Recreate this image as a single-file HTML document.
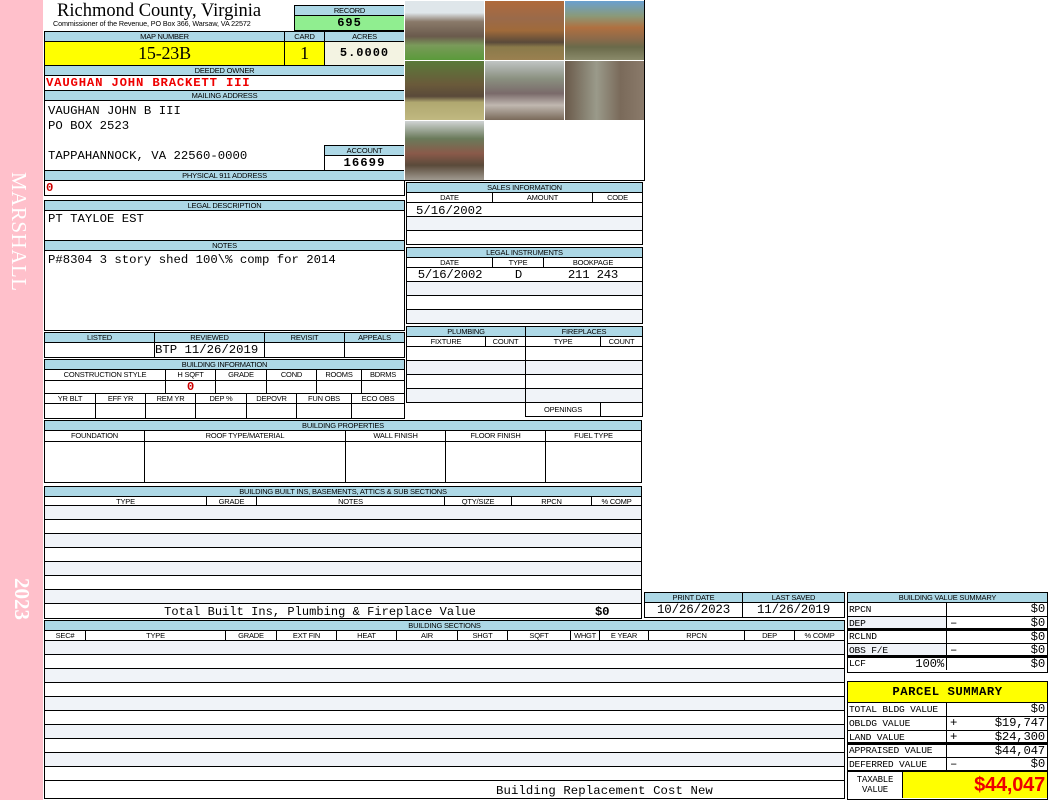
<!DOCTYPE html>
<html><head><meta charset="utf-8">
<style>
*{margin:0;padding:0;box-sizing:border-box}
body{width:1050px;height:800px;background:#fff;position:relative;overflow:hidden;font-family:"Liberation Sans",sans-serif}
.a{position:absolute}
.bx{position:absolute;border:1px solid #000;background:#fff}
.hd{background:#add8e6;border-bottom:1px solid #000;font-size:7.5px;text-align:center;overflow:hidden;white-space:nowrap;letter-spacing:-0.2px}
.r{display:flex;border-bottom:1px solid #000;overflow:hidden}
.r:last-child{border-bottom:none}
.r>div{border-right:1px solid #000;font-size:7.5px;text-align:center;white-space:nowrap;overflow:hidden;letter-spacing:-0.2px}
.r>div:last-child{border-right:none;flex:1}
.alt{background:#f0f3f8}
.m{font-family:"Liberation Mono",monospace}
.ph{position:absolute;width:79px;height:59px}
</style></head><body>
<div class="a" style="left:0;top:0;width:43px;height:800px;background:#ffc0cb"></div>
<div class="a" style="left:31px;top:172px;transform-origin:0 0;transform:rotate(90deg);font-family:'Liberation Serif',serif;font-size:21px;color:#fff;white-space:nowrap;letter-spacing:0.5px">MARSHALL</div>
<div class="a" style="left:34px;top:578px;transform-origin:0 0;transform:rotate(90deg);font-family:'Liberation Serif',serif;font-size:21px;font-weight:bold;color:#fff">2023</div>

<div class="a" style="left:57px;top:1px;font-family:'Liberation Serif',serif;font-size:18.5px">Richmond County, Virginia</div>
<div class="a" style="left:53px;top:19px;font-size:7.2px;letter-spacing:-0.1px">Commissioner of the Revenue, PO Box 366, Warsaw, VA 22572</div>

<div class="bx" style="left:294px;top:5px;width:111px;height:26px">
<div class="hd" style="height:10px;line-height:10px">RECORD</div>
<div class="m" style="background:#90ee90;height:14px;line-height:14px;text-align:center;font-weight:bold;font-size:12px;letter-spacing:1px">695</div></div>

<div class="bx" style="left:44px;top:31px;width:361px;height:35px">
<div class="r" style="height:10px;background:#add8e6;line-height:9px"><div style="width:240px">MAP NUMBER</div><div style="width:40px">CARD</div><div>ACRES</div></div>
<div class="r" style="height:23px"><div style="width:240px;background:#ffff00;font-family:'Liberation Serif',serif;font-size:18px;line-height:23px">15-23B</div><div style="width:40px;background:#ffff00;font-family:'Liberation Serif',serif;font-size:18px;line-height:23px">1</div><div class="m" style="background:#f3f3e2;font-size:12px;font-weight:bold;line-height:23px;letter-spacing:1px">5.0000</div></div></div>

<div class="bx" style="left:44px;top:65px;width:361px;height:26px">
<div class="hd" style="height:10px;line-height:10px">DEEDED OWNER</div>
<div class="m" style="color:#e00;font-weight:bold;font-size:12.3px;line-height:15px;padding-left:1px;letter-spacing:0.8px">VAUGHAN JOHN BRACKETT III</div></div>

<div class="bx" style="left:44px;top:90px;width:361px;height:81px">
<div class="hd" style="height:10px;line-height:10px">MAILING ADDRESS</div>
<div class="m" style="font-size:12.3px;line-height:15px;padding:3px 0 0 3px">VAUGHAN JOHN B III<br>PO BOX 2523<br><br>TAPPAHANNOCK, VA 22560-0000</div></div>
<div class="bx" style="left:324px;top:145px;width:81px;height:26px">
<div class="hd" style="height:10px;line-height:10px">ACCOUNT</div>
<div class="m" style="font-size:12.3px;font-weight:bold;line-height:15px;text-align:center;letter-spacing:1px">16699</div></div>

<div class="bx" style="left:44px;top:170px;width:361px;height:26px">
<div class="hd" style="height:10px;line-height:10px">PHYSICAL 911 ADDRESS</div>
<div class="m" style="color:#c00;font-weight:bold;font-size:12.3px;line-height:15px;padding-left:1px">0</div></div>

<div class="bx" style="left:44px;top:200px;width:361px;height:41px">
<div class="hd" style="height:10px;line-height:10px">LEGAL DESCRIPTION</div>
<div class="m" style="font-size:12.3px;line-height:17px;padding-left:3px">PT TAYLOE EST</div></div>

<div class="bx" style="left:44px;top:240px;width:361px;height:91px">
<div class="hd" style="height:10px;line-height:10px">NOTES</div>
<div class="m" style="font-size:12.3px;line-height:18px;padding-left:3px">P#8304 3 story shed 100\% comp for 2014</div></div>

<div class="bx" style="left:44px;top:332px;width:361px;height:26px">
<div class="r" style="height:10px;background:#add8e6;line-height:9px"><div style="width:110px">LISTED</div><div style="width:110px">REVIEWED</div><div style="width:80px">REVISIT</div><div>APPEALS</div></div>
<div class="r" style="height:14px"><div style="width:110px"></div><div class="m" style="width:110px;font-size:12.3px;text-align:left;line-height:14px;letter-spacing:0">BTP 11/26/2019</div><div style="width:80px"></div><div></div></div></div>

<div class="bx" style="left:44px;top:359px;width:361px;height:60px">
<div class="hd" style="height:10px;line-height:10px">BUILDING INFORMATION</div>
<div class="r" style="height:11px;line-height:10px"><div style="width:121px">CONSTRUCTION STYLE</div><div style="width:50px">H SQFT</div><div style="width:51px">GRADE</div><div style="width:50px">COND</div><div style="width:45px">ROOMS</div><div>BDRMS</div></div>
<div class="r" style="height:13px"><div style="width:121px"></div><div class="m" style="width:50px;color:#c00;font-weight:bold;font-size:12.3px;line-height:13px">0</div><div style="width:51px"></div><div style="width:50px"></div><div style="width:45px"></div><div></div></div>
<div class="r" style="height:10px;line-height:9px"><div style="width:51px">YR BLT</div><div style="width:50px">EFF YR</div><div style="width:50px">REM YR</div><div style="width:51px">DEP %</div><div style="width:50px">DEPOVR</div><div style="width:55px">FUN OBS</div><div>ECO OBS</div></div>
<div class="r" style="height:14px"><div style="width:51px"></div><div style="width:50px"></div><div style="width:50px"></div><div style="width:51px"></div><div style="width:50px"></div><div style="width:55px"></div><div></div></div></div>

<!-- photos -->
<div class="bx" style="left:404px;top:0;width:241px;height:181px;border-left:none;border-top:none"></div>
<div class="ph" style="left:405px;top:1px;background:linear-gradient(#dfe6ea 0,#dfe6ea 20%,#8a7a6a 35%,#6a5a4c 60%,#7a9a5a 75%,#5a9a3a 100%)"></div>
<div class="ph" style="left:485px;top:1px;background:linear-gradient(#b06a3a 0,#9a6a4a 30%,#a06a3a 50%,#5a4a3a 70%,#8a7a4a 78%,#9a8050 100%)"></div>
<div class="ph" style="left:565px;top:1px;background:linear-gradient(#6aa0d0 0,#8a9a7a 25%,#b07040 45%,#8a6a4a 65%,#6a6a4a 78%,#8a8a6a 100%)"></div>
<div class="ph" style="left:405px;top:61px;background:linear-gradient(#5a7a3a 0,#6a5a3a 40%,#5a4a3a 60%,#b0a870 70%,#c0b880 100%)"></div>
<div class="ph" style="left:485px;top:61px;background:linear-gradient(#c0c4c4 0,#8a9080 30%,#7a6a6a 55%,#c0b8b0 75%,#7a6a5a 100%)"></div>
<div class="ph" style="left:565px;top:61px;background:linear-gradient(90deg,#6a5a4a,#9a9a8a 40%,#7a6a5a 70%,#8a7a6a);"></div>
<div class="ph" style="left:405px;top:121px;background:linear-gradient(#d0d4d4 0,#6a7a5a 30%,#8a5a4a 55%,#5a4a3a 75%,#a09a90 100%)"></div>

<div class="bx" style="left:406px;top:182px;width:237px;height:63px">
<div class="hd" style="height:10px;line-height:10px">SALES INFORMATION</div>
<div class="r" style="height:10px;line-height:9px"><div style="width:86px">DATE</div><div style="width:100px">AMOUNT</div><div>CODE</div></div>
<div class="r m" style="height:14px;font-size:12.3px;line-height:16px;padding-left:9px">5/16/2002</div>
<div class="r alt" style="height:14px"></div>
<div class="r" style="height:13px"></div></div>

<div class="bx" style="left:406px;top:247px;width:237px;height:77px">
<div class="hd" style="height:10px;line-height:10px">LEGAL INSTRUMENTS</div>
<div class="r" style="height:10px;line-height:9px"><div style="width:86px">DATE</div><div style="width:51px">TYPE</div><div>BOOKPAGE</div></div>
<div class="r m" style="height:14px;line-height:15px"><div style="width:86px;border:none;font-size:12.3px">5/16/2002</div><div style="width:51px;border:none;font-size:12.3px">D</div><div style="font-size:12.3px">211 243</div></div>
<div class="r alt" style="height:14px"></div>
<div class="r" style="height:14px"></div>
<div class="r alt" style="height:13px"></div></div>

<div class="bx" style="left:406px;top:326px;width:120px;height:77px">
<div class="hd" style="height:10px;line-height:10px">PLUMBING</div>
<div class="r" style="height:10px;line-height:9px"><div style="width:79px">FIXTURE</div><div>COUNT</div></div>
<div class="r" style="height:14px"></div><div class="r alt" style="height:14px"></div><div class="r" style="height:14px"></div><div class="r alt" style="height:13px"></div></div>
<div class="bx" style="left:525px;top:326px;width:118px;height:91px">
<div class="hd" style="height:10px;line-height:10px">FIREPLACES</div>
<div class="r" style="height:10px;line-height:9px"><div style="width:75px">TYPE</div><div>COUNT</div></div>
<div class="r" style="height:14px"></div><div class="r alt" style="height:14px"></div><div class="r" style="height:14px"></div><div class="r alt" style="height:14px"></div>
<div class="r" style="height:13px;line-height:13px"><div style="width:75px">OPENINGS</div><div></div></div></div>

<div class="bx" style="left:44px;top:420px;width:598px;height:63px">
<div class="hd" style="height:10px;line-height:10px">BUILDING PROPERTIES</div>
<div class="r" style="height:11px;line-height:10px"><div style="width:100px">FOUNDATION</div><div style="width:201px">ROOF TYPE/MATERIAL</div><div style="width:100px">WALL FINISH</div><div style="width:100px">FLOOR FINISH</div><div>FUEL TYPE</div></div>
<div class="r" style="height:40px"><div style="width:100px"></div><div style="width:201px"></div><div style="width:100px"></div><div style="width:100px"></div><div></div></div></div>

<div class="bx" style="left:44px;top:486px;width:598px;height:133px">
<div class="hd" style="height:10px;line-height:10px">BUILDING BUILT INS, BASEMENTS, ATTICS &amp; SUB SECTIONS</div>
<div class="r" style="height:9px;line-height:9px"><div style="width:162px">TYPE</div><div style="width:50px">GRADE</div><div style="width:188px">NOTES</div><div style="width:67px">QTY/SIZE</div><div style="width:80px">RPCN</div><div>% COMP</div></div>
<div class="r alt" style="height:14px"></div><div class="r" style="height:14px"></div><div class="r alt" style="height:14px"></div><div class="r" style="height:14px"></div><div class="r alt" style="height:14px"></div><div class="r" style="height:14px"></div><div class="r alt" style="height:14px"></div>
<div class="r m" style="height:15px;line-height:16px"><div style="flex:none;width:520px;border:none;font-size:12px;text-align:center;padding-left:30px;letter-spacing:0.05px">Total Built Ins, Plumbing &amp; Fireplace Value</div><div style="font-size:12.3px;font-weight:bold;text-align:left;padding-left:30px">$0</div></div></div>

<div class="bx" style="left:644px;top:592px;width:201px;height:26px">
<div class="r" style="height:10px;background:#add8e6;line-height:9px"><div style="width:98px">PRINT DATE</div><div>LAST SAVED</div></div>
<div class="r m" style="height:14px;line-height:15px"><div style="width:98px;font-size:12.5px">10/26/2023</div><div style="font-size:12.5px">11/26/2019</div></div></div>

<div class="bx" style="left:44px;top:620px;width:801px;height:179px">
<div class="hd" style="height:10px;line-height:10px">BUILDING SECTIONS</div>
<div class="r" style="height:10px;line-height:9px"><div style="width:41px">SEC#</div><div style="width:140px">TYPE</div><div style="width:51px">GRADE</div><div style="width:60px">EXT FIN</div><div style="width:60px">HEAT</div><div style="width:61px">AIR</div><div style="width:50px">SHGT</div><div style="width:63px">SQFT</div><div style="width:29px">WHGT</div><div style="width:49px">E YEAR</div><div style="width:96px">RPCN</div><div style="width:50px">DEP</div><div>% COMP</div></div>
<div class="r alt" style="height:14px"></div><div class="r" style="height:14px"></div><div class="r alt" style="height:14px"></div><div class="r" style="height:14px"></div><div class="r alt" style="height:14px"></div><div class="r" style="height:14px"></div><div class="r alt" style="height:14px"></div><div class="r" style="height:14px"></div><div class="r alt" style="height:14px"></div><div class="r" style="height:14px"></div>
<div class="r m" style="height:17px;font-size:12.3px;line-height:21px;padding-left:451px;letter-spacing:0.1px">Building Replacement Cost New</div></div>

<div class="bx" style="left:847px;top:592px;width:201px;height:81px">
<div class="hd" style="height:10px;line-height:10px">BUILDING VALUE SUMMARY</div>
<div class="r m" style="height:14px;line-height:13px"><div style="flex:none;width:99px;text-align:left;font-size:9.6px;padding-left:1px">RPCN</div><div style="text-align:right;font-size:12.3px;padding-right:2px">$0</div></div>
<div class="r m alt" style="height:14px;line-height:13px;border-bottom:3px solid #000"><div style="flex:none;width:99px;text-align:left;font-size:9.6px;padding-left:1px">DEP</div><div style="text-align:right;font-size:12.3px;padding-right:2px;background:#fff"><span style="float:left;padding-left:3px">–</span>$0</div></div>
<div class="r m" style="height:13px;line-height:12px"><div style="flex:none;width:99px;text-align:left;font-size:9.6px;padding-left:1px">RCLND</div><div style="text-align:right;font-size:12.3px;padding-right:2px">$0</div></div>
<div class="r m alt" style="height:14px;line-height:13px;border-bottom:3px solid #000"><div style="flex:none;width:99px;text-align:left;font-size:9.6px;padding-left:1px">OBS F/E</div><div style="text-align:right;font-size:12.3px;padding-right:2px;background:#fff"><span style="float:left;padding-left:3px">–</span>$0</div></div>
<div class="r m" style="height:12px;line-height:12px"><div style="flex:none;width:99px;text-align:left;font-size:9.6px;padding-left:1px">LCF<span style="float:right;font-size:12.3px;padding-right:2px">100%</span></div><div style="text-align:right;font-size:12.3px;padding-right:2px">$0</div></div></div>

<div class="bx" style="left:847px;top:681px;width:201px;height:119px">
<div class="m" style="height:21px;background:#ffff00;border-bottom:1px solid #000;text-align:center;font-weight:bold;font-size:12.3px;line-height:20px;letter-spacing:0.5px">PARCEL SUMMARY</div>
<div class="r m" style="height:14px;line-height:13px"><div style="flex:none;width:99px;text-align:left;font-size:9.6px;padding-left:1px">TOTAL BLDG VALUE</div><div style="text-align:right;font-size:12.3px;padding-right:2px">$0</div></div>
<div class="r m" style="height:14px;line-height:13px"><div style="flex:none;width:99px;text-align:left;font-size:9.6px;padding-left:1px">OBLDG VALUE</div><div style="text-align:right;font-size:12.3px;padding-right:2px"><span style="float:left;padding-left:3px">+</span>$19,747</div></div>
<div class="r m" style="height:14px;line-height:13px;border-bottom:3px solid #000"><div style="flex:none;width:99px;text-align:left;font-size:9.6px;padding-left:1px">LAND VALUE</div><div style="text-align:right;font-size:12.3px;padding-right:2px"><span style="float:left;padding-left:3px">+</span>$24,300</div></div>
<div class="r m" style="height:13px;line-height:12px"><div style="flex:none;width:99px;text-align:left;font-size:9.6px;padding-left:1px">APPRAISED VALUE</div><div style="text-align:right;font-size:12.3px;padding-right:2px">$44,047</div></div>
<div class="r m" style="height:14px;line-height:13px;border-bottom:2px solid #000"><div style="flex:none;width:99px;text-align:left;font-size:9.6px;padding-left:1px">DEFERRED VALUE</div><div style="text-align:right;font-size:12.3px;padding-right:2px"><span style="float:left;padding-left:3px">–</span>$0</div></div>
<div class="r" style="height:26px"><div class="m" style="flex:none;width:55px;font-size:9px;line-height:10px;padding-top:3px">TAXABLE<br>VALUE</div><div style="background:#ffff00;color:#e00;font-weight:bold;font-size:20px;text-align:right;line-height:26px;padding-right:2px">$44,047</div></div></div>
</body></html>
